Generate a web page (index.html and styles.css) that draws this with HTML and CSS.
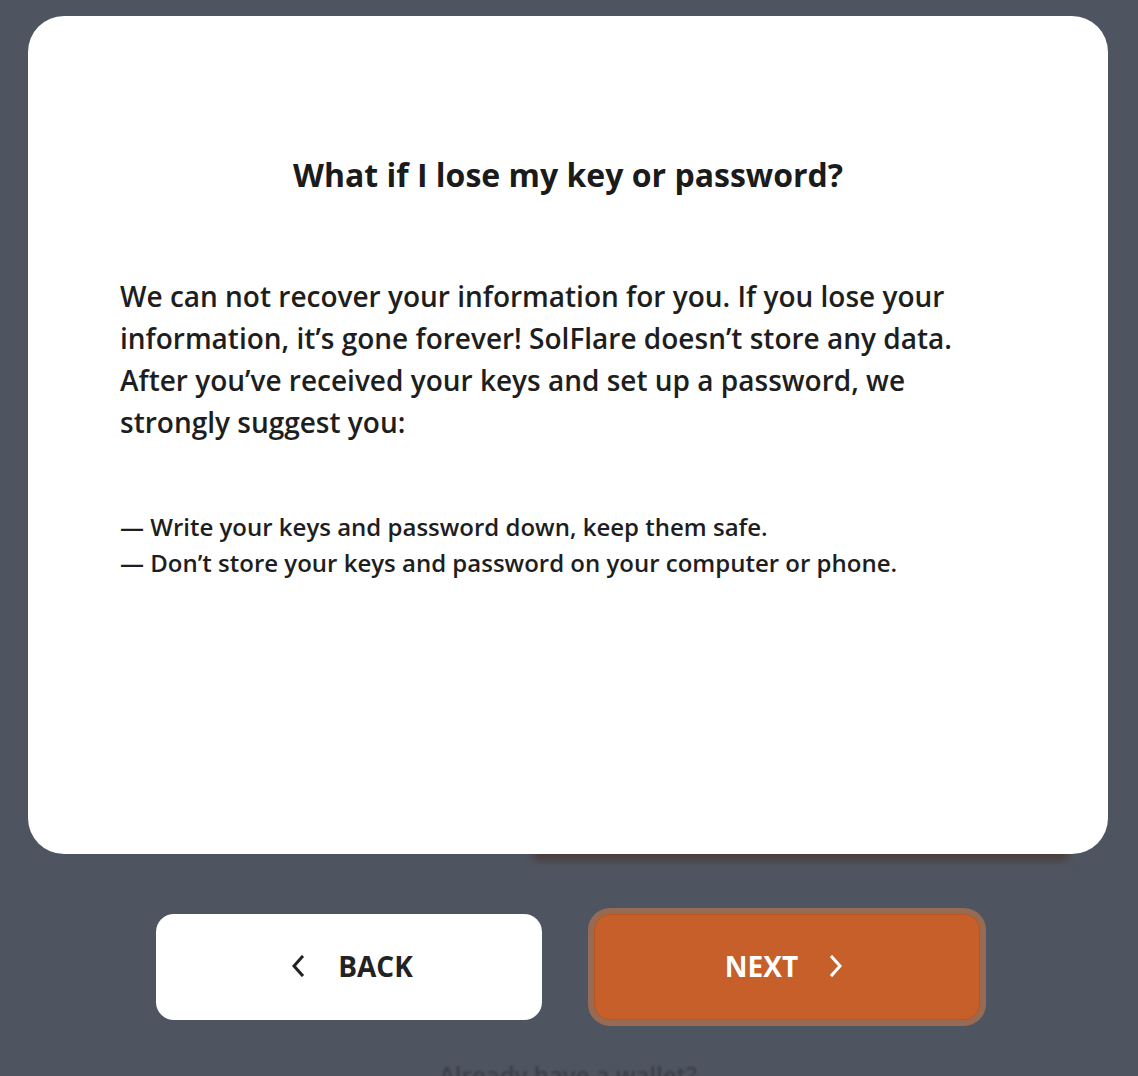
FILE: index.html
```html
<!DOCTYPE html>
<html lang="en">
<head>
<meta charset="utf-8">
<title>SolFlare</title>
<link rel="stylesheet" href="styles.css">
</head>
<body>
<div class="page">
  <div class="card-wrap">
    <div class="glow"></div>
    <section class="card">
      <h1 class="title">What if I lose my key or password?</h1>
      <p class="lead">We can not recover your information for you. If you lose your information, it’s gone forever! SolFlare doesn’t store any data. After you’ve received your keys and set up a password, we strongly suggest you:</p>
      <ul class="tips">
        <li>— Write your keys and password down, keep them safe.</li>
        <li>— Don’t store your keys and password on your computer or phone.</li>
      </ul>
    </section>
  </div>
  <div class="actions">
    <button class="btn btn-back">
      <svg class="chev" width="14" height="22" viewBox="0 0 14 22"><path d="M11 2 L3 11 L11 20" fill="none" stroke="currentColor" stroke-width="3" stroke-linecap="square"/></svg>
      <span>BACK</span>
    </button>
    <button class="btn btn-next">
      <span>NEXT</span>
      <svg class="chev" width="14" height="22" viewBox="0 0 14 22"><path d="M3 2 L11 11 L3 20" fill="none" stroke="currentColor" stroke-width="3" stroke-linecap="square"/></svg>
    </button>
  </div>
  <p class="already">Already have a wallet?</p>
</div>
</body>
</html>
```

FILE: styles.css
```css
html, body {
  margin: 0;
  padding: 0;
  background: #4f5560;
  height: 1076px;
  overflow: hidden;
}
body {
  font-family: "Open Sans", "Noto Sans", sans-serif;
  color: #1e1e1e;
}
.page {
  display: flex;
  flex-direction: column;
  align-items: center;
  padding-top: 16px;
  padding-right: 2px;
}
.card-wrap {
  position: relative;
  width: 1080px;
}
.glow {
  position: absolute;
  left: 505px;
  width: 535px;
  bottom: -6px;
  height: 14px;
  background: #4a3a38;
  filter: blur(4px);
  z-index: 0;
}
.card {
  position: relative;
  z-index: 1;
  box-sizing: border-box;
  height: 838px;
  background: #fff;
  border-radius: 36px;
  padding: 139px 92px 0;
}
.title {
  margin: 0;
  text-align: center;
  font-size: 32px;
  line-height: 40px;
  font-weight: 700;
  color: #1b1b1b;
}
.lead {
  margin: 80px 0 0;
  font-size: 28px;
  line-height: 42px;
  font-weight: 600;
  color: #1e1e1e;
}
.tips {
  list-style: none;
  margin: 66px 0 0;
  padding: 0;
  font-size: 24px;
  line-height: 36px;
  font-weight: 600;
  color: #1e1e1e;
}
.actions {
  display: flex;
  gap: 52px;
  margin-top: 60px;
}
.btn {
  box-sizing: border-box;
  width: 386px;
  height: 106px;
  border-radius: 18px;
  border: none;
  display: flex;
  align-items: center;
  justify-content: center;
  gap: 33px;
  font-family: "Open Sans", "Noto Sans", sans-serif;
  font-size: 28px;
  font-weight: 700;
  cursor: pointer;
  padding: 0 0 3px;
}
.btn-back {
  background: #fff;
  color: #222;
  padding-left: 6px;
}
.btn-next {
  background: #c65f29;
  color: #fff;
  border: 1px solid #b9561f;
  box-shadow: 0 0 0 6px #976b53;
  border-radius: 16px;
  padding-right: 6px;
  gap: 31px;
}
.chev {
  display: block;
}
.already {
  margin: 38px 0 0;
  font-size: 24px;
  font-weight: 600;
  color: #3a3f48;
  filter: blur(1.2px);
}
```
